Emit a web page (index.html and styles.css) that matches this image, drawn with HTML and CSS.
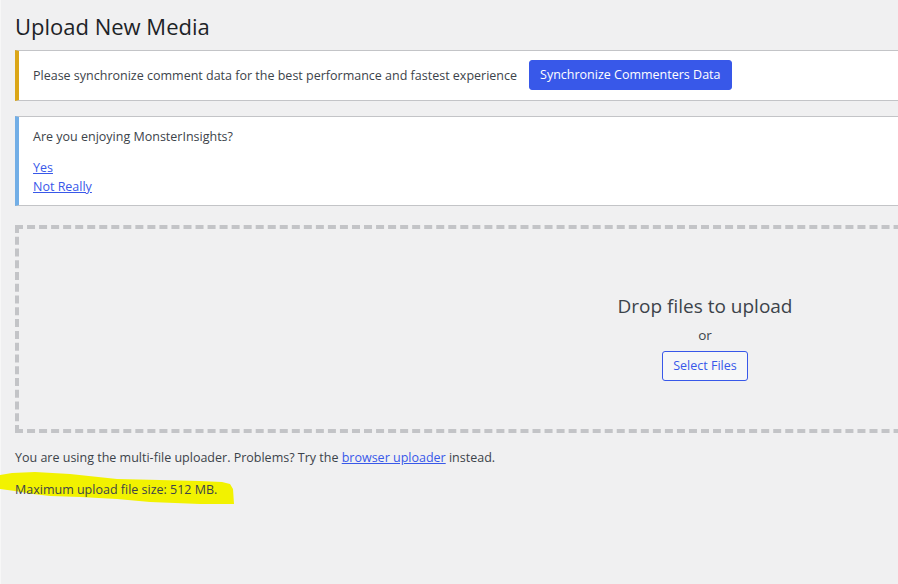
FILE: index.html
```html
<!DOCTYPE html>
<html lang="en">

<head>
    <meta charset="UTF-8">
    <meta name="viewport" content="width=device-width, initial-scale=1.0">
    <title>Upload New Media</title>
    <link rel="stylesheet" href="styles.css">
</head>

<body>
    <div class="page">
        <div class="wrap">
            <h1>Upload New Media</h1>

            <div class="notice notice-warning">
                <span>Please synchronize comment data for the best performance and fastest experience</span>
                <a class="button button-primary" href="#">Synchronize Commenters Data</a>
            </div>

            <div class="notice notice-info">
                <p class="question">Are you enjoying MonsterInsights?</p>
                <a class="answer" href="#">Yes</a>
                <a class="answer" href="#">Not Really</a>
            </div>

            <div class="drag-drop-area">
                <div class="drag-drop-inside">
                    <p class="drag-drop-info">Drop files to upload</p>
                    <p class="drag-drop-or">or</p>
                    <button class="button button-outline" type="button">Select Files</button>
                </div>
            </div>

            <p class="upload-flash">You are using the multi-file uploader. Problems? Try the <a href="#">browser uploader</a> instead.</p>
            <p class="max-upload">
                <svg class="marker" width="240" height="40" viewBox="0 0 240 40">
                    <polygon fill="#f2f200" points="0,6 12,4 35,3 70,5 117,10 160,11 200,12 222,13 230,15 233,20 234,35 200,35 150,33 117,30 80,28 50,27 33,25 15,22 0,20" />
                </svg>
                <span>Maximum upload file size: 512 MB.</span>
            </p>
        </div>
    </div>
</body>

</html>
```

FILE: styles.css
```css
body {
    margin: 0;
    background-color: #f0f0f1;
    color: #3c434a;
    font-family: "Open Sans", "Noto Sans", sans-serif;
    font-size: 12.5px;
    line-height: 19.5px;
    overflow: hidden;
}

.page {
    min-height: 584px;
    border-left: 1px solid #f7f7f7;
    padding-left: 14px;
}

.wrap {
    width: 1380px;
}

a {
    color: #3858e9;
}

h1 {
    margin: 0;
    padding: 11px 0 2px;
    font-size: 22px;
    font-weight: 400;
    line-height: 30px;
    color: #1d2327;
}

.notice {
    background-color: #fff;
    border: 1px solid #c3c4c7;
    border-left-width: 4px;
}

.notice-warning {
    margin-top: 7px;
    padding: 9px 14px 10px;
    display: flex;
    align-items: center;
    gap: 12px;
    border-left-color: #dba617;
}

.notice-warning span {
    padding-top: 2px;
}

.notice-info {
    margin-top: 15px;
    padding: 10px 14px 8px;
    border-left-color: #72aee6;
}

.notice-info .question {
    margin: 0 0 11px;
}

.notice-info .answer {
    display: block;
    width: max-content;
}

.button {
    display: inline-flex;
    align-items: center;
    height: 30px;
    padding: 0 10px;
    box-sizing: border-box;
    border-radius: 3px;
    font-family: inherit;
    font-size: 12.5px;
    text-decoration: none;
    white-space: nowrap;
}

.button-primary {
    background-color: #3858e9;
    border: 1px solid #3858e9;
    color: #fff;
}

.button-outline {
    background-color: #f6f7f7;
    border: 1px solid #3858e9;
    color: #3858e9;
}

.drag-drop-area {
    margin-top: 19px;
    height: 200px;
    border: 4px dashed #c3c4c7;
}

.drag-drop-inside {
    padding-top: 63px;
    display: flex;
    flex-direction: column;
    align-items: center;
}

.drag-drop-inside p {
    margin: 0;
}

.drag-drop-info {
    font-size: 19px;
    line-height: 28px;
}

.drag-drop-or {
    margin-top: 5px !important;
    font-size: 13.5px;
    line-height: 21px;
}

.drag-drop-inside .button {
    margin-top: 5px;
}

.upload-flash {
    margin: 15px 0 0;
}

.max-upload {
    position: relative;
    margin: 13px 0 0;
}

.max-upload span {
    position: relative;
}

.max-upload .marker {
    position: absolute;
    left: -15px;
    top: -11px;
}
```
